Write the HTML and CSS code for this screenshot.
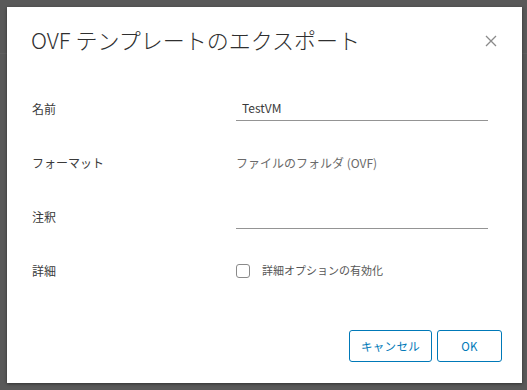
FILE: index.html
```html
<!DOCTYPE html>
<html lang="ja">
<head>
<meta charset="utf-8">
<link rel="stylesheet" href="styles.css">
</head>
<body>
<div class="backdrop">
  <div class="modal">
    <div class="modal-header">
      <h3 class="modal-title">OVF テンプレートのエクスポート</h3>
      <button class="close" aria-label="閉じる">
        <svg width="12" height="12" viewBox="0 0 12 12"><path d="M1 1 L11 11 M11 1 L1 11" stroke="#8a8a8a" stroke-width="1.3" fill="none"/></svg>
      </button>
    </div>
    <div class="modal-body">
      <div class="row">
        <div class="label">名前</div>
        <div class="field"><div class="input">TestVM</div></div>
      </div>
      <div class="row">
        <div class="label">フォーマット</div>
        <div class="field"><span class="value">ファイルのフォルダ (OVF)</span></div>
      </div>
      <div class="row">
        <div class="label">注釈</div>
        <div class="field"><div class="input"></div></div>
      </div>
      <div class="row">
        <div class="label">詳細</div>
        <div class="field check"><span class="box"></span><span class="check-label">詳細オプションの有効化</span></div>
      </div>
    </div>
    <div class="modal-footer">
      <button class="btn">キャンセル</button>
      <button class="btn ok">OK</button>
    </div>
  </div>
</div>
</body>
</html>
```
FILE: styles.css
```css
* { box-sizing: border-box; }
html, body { margin: 0; padding: 0; }
body {
  width: 527px;
  height: 390px;
  overflow: hidden;
  font-family: "Noto Sans CJK JP", "Noto Sans", sans-serif;
  background: #585858;
}
.backdrop {
  height: 390px;
  padding: 7px 5px 7px 7px;
  background:
    linear-gradient(#5f5f5f, #5f5f5f) 0 53px / 100% 1px no-repeat,
    #595959;
}
.modal {
  width: 515px;
  height: 376px;
  background: #fff;
  box-shadow: 0 1px 3px rgba(0,0,0,0.45);
  display: flex;
  flex-direction: column;
  padding: 0 20px 0 24px;
}
.modal-header {
  display: flex;
  align-items: center;
  justify-content: space-between;
  height: 47px;
  padding-top: 17px;
}
.modal-title {
  margin: 0;
  font-size: 22px;
  font-weight: 300;
  line-height: 30px;
  color: #2f2f2f;
}
.close {
  border: 0;
  background: none;
  padding: 0;
  width: 12px;
  height: 12px;
  margin-right: 5px;
  margin-top: 3px;
  display: flex;
}
.modal-body {
  margin-top: 27px;
  display: flex;
  flex-direction: column;
}
.row {
  height: 54px;
  display: flex;
  align-items: center;
}
.label {
  width: 205px;
  padding-left: 1px;
  font-size: 12px;
  color: #3a3a3a;
}
.field {
  width: 252px;
  font-size: 12px;
}
.input {
  height: 24px;
  margin-top: 1px;
  border-bottom: 1px solid #949494;
  padding-left: 6px;
  line-height: 22px;
  font-size: 12px;
  color: #3a3a3a;
}
.value {
  color: #6a6a6a;
}
.check {
  display: flex;
  align-items: center;
}
.box {
  width: 14px;
  height: 14px;
  border: 1px solid #8a8a8a;
  border-radius: 3px;
  margin-right: 12px;
  margin-top: 1px;
}
.check-label {
  font-size: 11px;
  color: #565656;
}
.modal-footer {
  margin-top: 33px;
  display: flex;
  justify-content: flex-end;
  gap: 5px;
}
.btn {
  height: 32px;
  width: 83px;
  border: 1px solid #0079b8;
  border-radius: 3px;
  background: #fff;
  color: #0079b8;
  font-family: "Noto Sans CJK JP", "Noto Sans", sans-serif;
  font-size: 11.5px;
  letter-spacing: 0.3px;
  padding: 0;
}
.btn.ok { width: 65px; }
```
